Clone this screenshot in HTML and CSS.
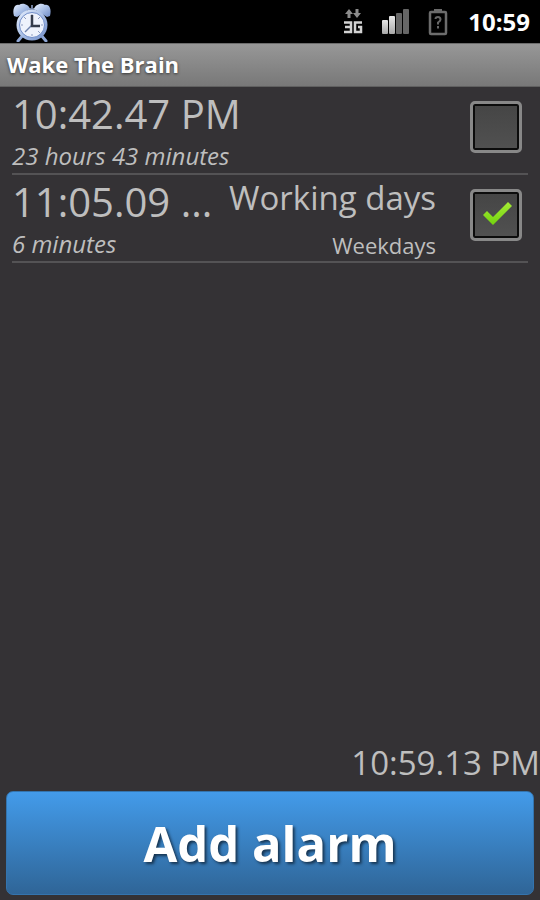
FILE: index.html
```html
<!DOCTYPE html>
<html lang="en">
<head>
<meta charset="utf-8">
<meta name="viewport" content="width=device-width, initial-scale=1">
<title>Wake The Brain</title>
<link rel="stylesheet" href="styles.css">
</head>
<body>
<div class="status">
  <svg class="status-alarm" viewBox="0 0 40 40" aria-hidden="true">
    <defs>
      <linearGradient id="metal" x1="0" y1="0" x2="1" y2="1">
        <stop offset="0" stop-color="#eaf2ff"/><stop offset=".5" stop-color="#a9bfe6"/><stop offset="1" stop-color="#6f8bc6"/>
      </linearGradient>
    </defs>
    <path d="M11 33l-5 6M29 33l5 6" stroke="#8ea6d4" stroke-width="3" stroke-linecap="round"/>
    <path d="M20 3v6M16 7h8" stroke="#6f7d9c" stroke-width="2"/>
    <path d="M2 14C0 7 3 2 7 3C11 0 17 3 18 7L5 15Z" fill="url(#metal)"/>
    <path d="M38 14C40 7 37 2 33 3C29 0 23 3 22 7L35 15Z" fill="url(#metal)"/>
    <circle cx="20" cy="23" r="15.500" fill="url(#metal)"/>
    <circle cx="20" cy="23" r="12.500" fill="#eef2fc" stroke="#6f8cc8" stroke-width="1"/>
    <path d="M20 12v2M20 32v2M9 23h2M29 23h2M12 15l2 2M28 15l-2 2M28 31l-2-2" stroke="#8d9cc0" stroke-width="1"/>
    <path d="M20 23l-7 7" stroke="#7184ad" stroke-width="1.500"/>
    <path d="M20 13v11h8" fill="none" stroke="#343c4c" stroke-width="2.500"/>
  </svg>
  <svg class="status-net" viewBox="0 0 20 26" aria-hidden="true">
    <path d="M6 0l4 5H7.500v4h-3V5H2zM14 9l-4-5h2.500V0h3v4H18z" fill="#8b8b8b"/>
    <path d="M1 13.500h7v9.500H1M2 18h6M19 13.500h-7v9.500h6v-5h-3" fill="none" stroke="#d2d2d2" stroke-width="2.500"/>
  </svg>
  <svg class="status-signal" viewBox="0 0 28 26" aria-hidden="true">
    <defs>
      <linearGradient id="bar" x1="0" y1="0" x2="0" y2="1"><stop offset="0" stop-color="#e8e8e8"/><stop offset="1" stop-color="#a8a8a8"/></linearGradient>
    </defs>
    <rect x="0" y="11" width="6" height="14" rx="1" fill="url(#bar)"/>
    <rect x="7" y="7" width="6" height="18" rx="1" fill="url(#bar)"/>
    <rect x="14" y="4" width="6" height="21" rx="1" fill="#666"/>
    <rect x="21" y="0" width="6" height="25" rx="1" fill="#666"/>
  </svg>
  <svg class="status-battery" viewBox="0 0 20 28" aria-hidden="true">
    <path d="M6 3V1h8v2" fill="#6c6c6c"/>
    <rect x="2" y="4" width="16" height="22" rx="1" fill="none" stroke="#6c6c6c" stroke-width="2.500"/>
    <path d="M7.500 11q0-2 2.500-2t2.500 2.500q0 1.500-2.500 3v2M10 18v2.500" fill="none" stroke="#666" stroke-width="2"/>
  </svg>
  <time class="status-time">10:59</time>
</div>
<header class="titlebar"><h1>Wake The Brain</h1></header>
<main class="alarms">
  <section class="alarm">
    <div class="when">
      <div class="time">10:42.47 PM</div>
      <div class="left">23 hours 43 minutes</div>
    </div>
    <input class="toggle" type="checkbox" aria-label="10:42.47 PM alarm">
  </section>
  <section class="alarm">
    <div class="when">
      <div class="time">11:05.09 ...</div>
      <div class="left">6 minutes</div>
    </div>
    <div class="what">
      <div class="name">Working days</div>
      <div class="repeat">Weekdays</div>
    </div>
    <span class="checked">
      <input class="toggle" type="checkbox" checked aria-label="Working days alarm">
      <svg class="tick" viewBox="0 0 32 26" aria-hidden="true">
        <defs><linearGradient id="green" x1="0" y1="0" x2="0" y2="1"><stop offset="0" stop-color="#a5ec35"/><stop offset="1" stop-color="#72d20e"/></linearGradient></defs>
        <path d="M1 14l4-4 6 6L26 1l4 4-19 19z" fill="url(#green)"/>
      </svg>
    </span>
  </section>
</main>
<footer class="bottom">
  <time class="clock">10:59.13 PM</time>
  <button class="add" type="button">Add alarm</button>
</footer>
</body>
</html>
```
FILE: styles.css
```css
* { box-sizing: border-box; }

body {
  margin: 0;
  min-height: 100vh;
  display: flex;
  flex-direction: column;
  background: #343235;
  color: #bebebe;
  font-family: "Open Sans", "Noto Sans", sans-serif;
}

.status {
  display: flex;
  align-items: center;
  height: 43px;
  padding: 0 10px 0 12px;
  background: #000;
}
.status-alarm { width: 40px; height: 40px; margin-right: auto; }
.status-net { width: 20px; height: 26px; margin-right: 19px; }
.status-signal { width: 28px; height: 26px; margin-right: 18px; }
.status-battery { width: 20px; height: 28px; margin-right: 20px; }
.status-time { color: #fff; font-size: 24px; font-weight: 700; }

.titlebar {
  height: 44px;
  padding: 0 7px;
  background: linear-gradient(#979797, #787878);
  border-top: 1px solid #6c6c6c;
  border-bottom: 1px solid #606060;
}
.titlebar h1 {
  margin: 0;
  color: #fff;
  font-size: 22px;
  line-height: 40px;
  text-shadow: 0 1px 3px #333;
}

.alarms { flex: 1; padding: 0 12px; }
.alarm {
  display: flex;
  height: 88px;
  padding-right: 6px;
  border-bottom: 2px solid #545355;
}
.when { flex: 1; white-space: nowrap; }
.time { font-size: 40px; line-height: 54px; }
.left { font-size: 24px; line-height: 30px; font-style: italic; }
.what { text-align: right; margin-right: 34px; white-space: nowrap; }
.name { font-size: 33px; line-height: 46px; }
.repeat { font-size: 22px; line-height: 48px; }

.toggle {
  appearance: none;
  display: block;
  width: 52px;
  height: 52px;
  margin: 14px 0 0;
  border: 3px solid #888;
  border-radius: 5px;
  background: linear-gradient(#454545, #515151);
  box-shadow: inset 0 0 0 2px #0c0c0c;
}
.checked { position: relative; }
.tick {
  position: absolute;
  left: 12px;
  top: 26px;
  width: 32px;
  height: 26px;
  pointer-events: none;
}

.bottom { display: flex; flex-direction: column; padding: 0 6px 5px; }
.clock {
  align-self: flex-end;
  margin-right: -6px;
  font-size: 33px;
  line-height: 56px;
}
.add {
  height: 104px;
  border: 1px solid #3474ae;
  border-radius: 7px;
  background: linear-gradient(#439bea, #2f6597);
  color: #fff;
  font: inherit;
  font-size: 49px;
  font-weight: 700;
  text-shadow: 2px 2px 3px #173450;
}
```
